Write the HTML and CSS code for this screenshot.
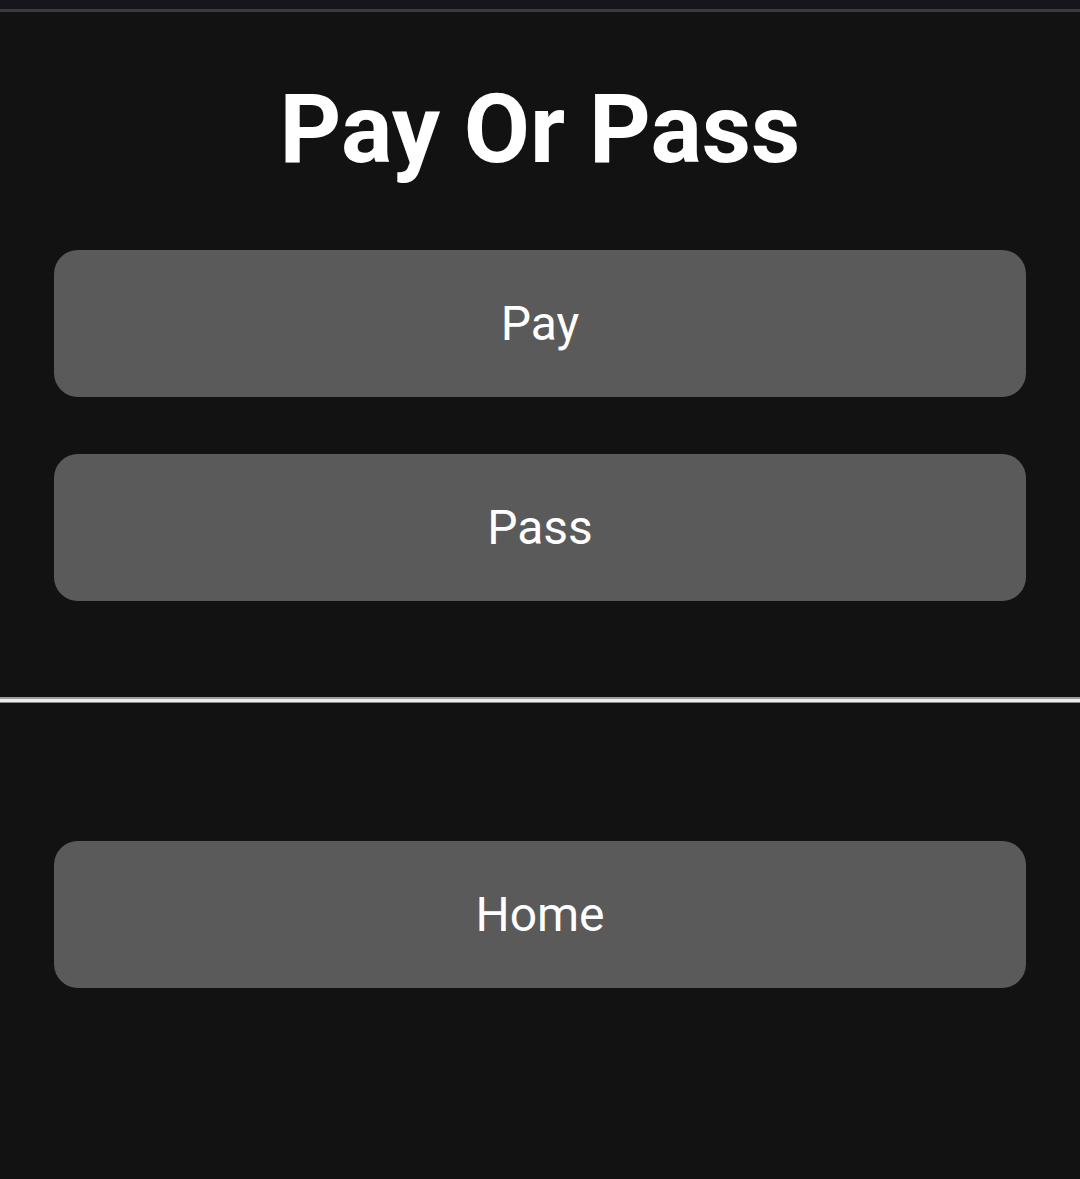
FILE: index.html
```html
<!DOCTYPE html>
<html>
<head>
<meta charset="utf-8">
<link rel="stylesheet" href="styles.css">
</head>
<body>
<div class="topbar"></div>
<main class="page">
  <h1 class="title">Pay Or Pass</h1>
  <div class="actions">
    <button class="btn">Pay</button>
    <button class="btn">Pass</button>
  </div>
  <hr class="divider">
  <div class="footer-actions">
    <button class="btn">Home</button>
  </div>
</main>
</body>
</html>
```

FILE: styles.css
```css
* { box-sizing: border-box; }
html, body {
  margin: 0;
  padding: 0;
  background: #121212;
  font-family: Roboto, "Liberation Sans", sans-serif;
  color: #ffffff;
  height: 100%;
}
.topbar {
  height: 12px;
  background: #16151c;
  border-bottom: 3px solid #3b3a41;
}
.page {
  display: flex;
  flex-direction: column;
}
.title {
  margin: 0;
  padding-top: 61px;
  height: 238px;
  text-align: center;
  font-size: 96px;
  font-weight: 700;
  line-height: 112px;
}
.actions {
  display: flex;
  flex-direction: column;
  gap: 57px;
  padding: 0 54px;
}
.btn {
  display: block;
  width: 100%;
  height: 147px;
  border: none;
  border-radius: 24px;
  background: #5a5a5a;
  color: #ffffff;
  font-family: Roboto, "Liberation Sans", sans-serif;
  font-size: 48px;
  font-weight: 400;
}
.divider {
  margin: 96px 0 0 0;
  height: 6px;
  border: none;
  border-top: 2px solid #9c9c9c;
  background: #ececec;
  border-bottom: 1px solid #8a8a8a;
}
.footer-actions {
  padding: 138px 54px 0;
}
```
